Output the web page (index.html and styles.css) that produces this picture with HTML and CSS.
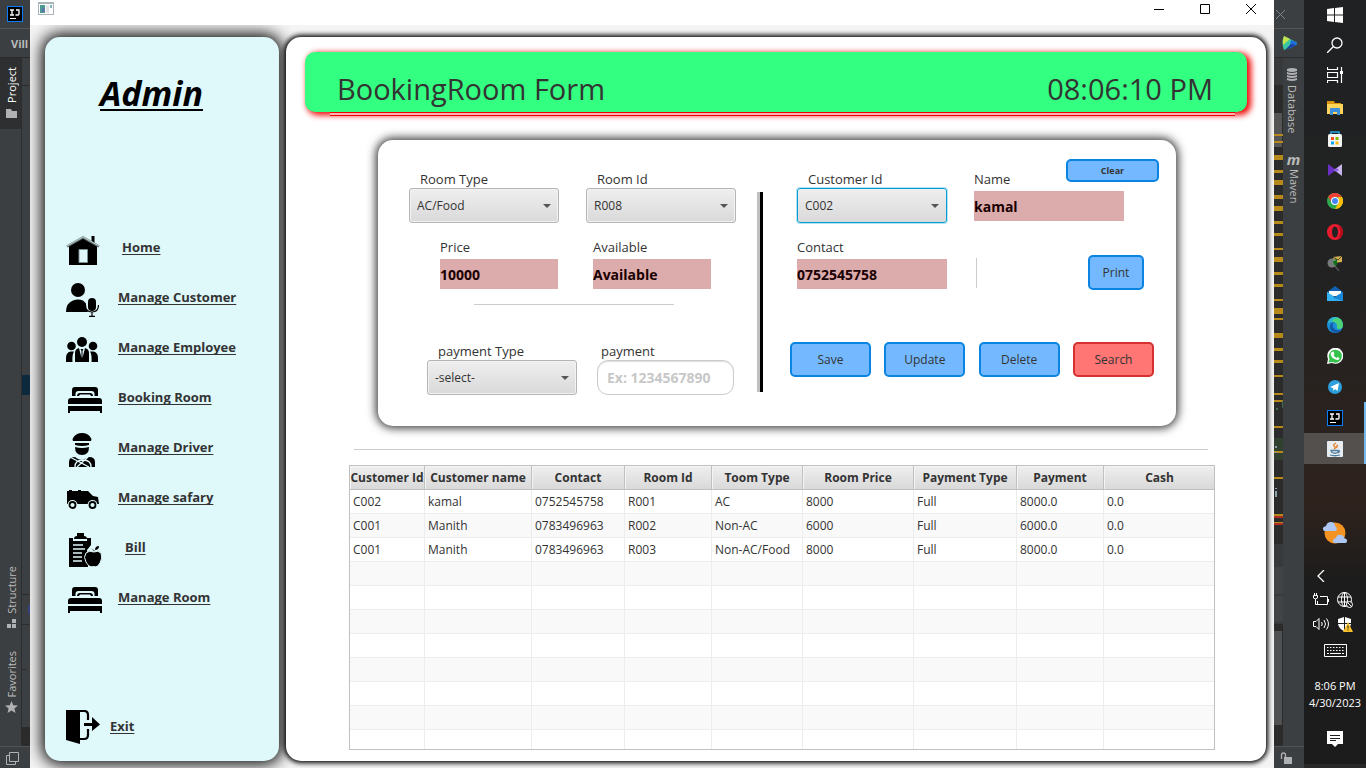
FILE: index.html
```
<!DOCTYPE html>
<html lang="en">
<head>
<meta charset="utf-8">
<title>BookingRoom Form</title>
<link rel="stylesheet" href="styles.css">
</head>
<body>
<svg class="sprite" aria-hidden="true">
  <symbol id="bed" viewBox="0 0 34 26">
    <path d="M4 9V3q0-3 3-3h20q3 0 3 3v6h-3.500V7q0-3-3-3h-13Q7.500 4 7.500 7v2z"/>
    <path d="M9 9q0-3 3-3h10q3 0 3 3h-2l-1-1.500h-10L11 9z"/>
    <path d="M3 11h28q3 0 3 3v3H0v-3q0-3 3-3zM0 19h34v7h-2v-2H2v2H0z"/>
  </symbol>
  <symbol id="ij" viewBox="0 0 16 16">
    <path fill="#087cfa" d="M0 0h16v16H0z"/><path d="M1 1h14v14H1z"/>
    <path d="M3 4h4M5 4v5M3 9h4M9 4h3v4q0 1-1 1H8.500" fill="none" stroke="#fff" stroke-width="1.300"/>
    <path d="M3 12h6v1H3z" fill="#fff"/>
  </symbol>
</svg>
<div class="desktop">
  <aside class="ide ide-left">
    <div class="ide-top"><svg width="16" height="16"><use href="#ij"/></svg></div>
    <div class="ide-path">Vill</div>
    <div class="ide-body">
      <div class="stripe">
        <div class="tool tool-active"><span>Project</span>
          <svg width="11" height="9"><path fill="#afb1b3" d="M0 0h5l1 2h5v7H0z"/></svg></div>
        <div class="tool tool-low"><span>Structure</span>
          <svg width="10" height="9"><path fill="#afb1b3" d="M5 0h4v4H5zM0 5h4v4H0zM5 5h4v4H5z"/></svg></div>
        <div class="tool tool-last"><span>Favorites</span>
          <svg width="13" height="12" viewBox="0 0 13 12"><path fill="#afb1b3" d="M6.500 0l1.800 4.200 4.700.3-3.600 2.900L10.500 12l-4-2.600-4 2.600 1.100-4.600L0 4.500l4.700-.3z"/></svg></div>
      </div>
      <svg class="tree" width="9" height="100%"><path fill="#2b2d2e" d="M0 0h1v700H0zM0 27h9v1H0zM0 536h9v1H0zM0 566h9v1H0zM0 611h5v1H0z"/><path fill="#0d293e" d="M1 317h8v20H1z"/><path fill="#35407c" d="M7 547h2v9H7z"/><path fill="#2b2b2b" d="M0 669h9v21H0z"/></svg>
    </div>
    <div class="ide-status"><svg width="13" height="13" fill="none" stroke="#afb1b3"><path d="M3.500.5h9v9h-9zM3.500 3.500h-3v9h9v-3"/></svg></div>
  </aside>

  <section class="window">
    <header class="titlebar">
      <svg class="app-icon" width="16" height="13"><path fill="#a9b5bb" d="M0 0h16v13H0z"/><path fill="#fff" d="M1 2h14v10H1z"/><path fill="#4d9a92" d="M2 3h5v8H2z"/><path fill="#5a79aa" d="M4 6h3v4H4z"/><path fill="#e2e5e6" d="M8 3h3v8H8z"/><path fill="#86b5bd" d="M12 3h2v3h-2z"/></svg>
      <button class="win-btn" aria-label="Minimize"><svg width="11" height="11" stroke="#000"><path d="M0 5.500h10"/></svg></button>
      <button class="win-btn" aria-label="Maximize"><svg width="11" height="11" stroke="#000" fill="none"><path d="M.5.5h9v9h-9z"/></svg></button>
      <button class="win-btn" aria-label="Close"><svg width="11" height="11" stroke="#000"><path d="M0 0l10 10M10 0L0 10"/></svg></button>
    </header>
    <div class="workspace">
      <nav class="sidebar">
        <h1 class="brand">Admin</h1>
        <ul class="menu">
          <li><svg class="icon" viewBox="0 0 34 30"><path d="M3 11L17 3l14 8v19H3z"/><path d="M25.500 1h3v8h-3z"/><path fill="none" stroke="#52605f" stroke-width="2.500" d="M1 11.500L17 2.500l16 9"/><path fill="none" stroke="#b4c7c8" stroke-width="1.300" d="M1 11L17 2l16 9"/><path fill="#dff8fa" stroke="#7e9091" d="M13 14.500h8.500v13H13z"/></svg><a class="step-1" href="#">Home</a></li>
          <li><svg class="icon" viewBox="0 0 34 34"><circle cx="12" cy="7" r="7"/><path d="M0 29q0-9 7-11.500 5-2 10 0l3 3v5l2 3.500z"/><rect x="22" y="15" width="8" height="13" rx="4"/><path fill="none" stroke="#000" stroke-width="1.200" d="M19.500 22q0 7 6.500 7t6.500-7M26 29v4M23 33.400h6"/></svg><a href="#">Manage Customer</a></li>
          <li><svg class="icon" viewBox="0 0 34 34"><circle cx="16" cy="9" r="5"/><circle cx="5.500" cy="13" r="4.300"/><circle cx="27" cy="13" r="4.300"/><path d="M0 29v-4q0-6 5-6.500h3q-2 3-1.500 10.500zM32 29v-4q0-6-5-6.500h-3q2 3 1.500 10.500zM9 29v-9q0-4 4-5l2.500 10v-7l-1-2h3l-1 2v7L19 15q4 1 4 5v9z"/></svg><a href="#">Manage Employee</a></li>
          <li><svg class="icon icon-bed" viewBox="0 0 34 26"><use href="#bed"/></svg><a href="#">Booking Room</a></li>
          <li><svg class="icon" viewBox="0 0 34 34"><path d="M7 8q-1-2 0-3 3-5 9-5t9 5q1 1 0 3zM9 10h14v2q-7 2-14 0zM9 14q7 2 14 0 0 8-7 8t-7-8zM3 34v-5q0-5 6-5 3 3 7 3l7-3q6 0 6 5v5z"/><path fill="none" stroke="#dff8fa" stroke-width="1.300" d="M4 24l19 10M9 34q0-7 8-7t8 7M11 34l11-10"/></svg><a href="#">Manage Driver</a></li>
          <li><svg class="icon" viewBox="0 0 34 34"><path d="M1 8h21l5 5 5 1 1 7H1zM3 7h3v1H3zM12 7h3v1h-3z"/><circle cx="6.500" cy="22" r="5" fill="#dff8fa"/><circle cx="26.500" cy="22" r="5" fill="#dff8fa"/><circle cx="6.500" cy="22" r="3" fill="none" stroke="#000" stroke-width="1.800"/><circle cx="26.500" cy="22" r="3" fill="none" stroke="#000" stroke-width="1.800"/></svg><a href="#">Manage safary</a></li>
          <li><svg class="icon icon-bed" viewBox="0 0 34 34"><path d="M1 5h4v3h14V5h4v7l-4 5 1 17H1zM6 6q0-3 3-3V0h7v3q3 0 3 3z"/><path fill="none" stroke="#dff8fa" stroke-width="1.500" d="M5 12h10M5 16h12M5 20h9M5 24h9M5 28h9"/><path stroke="#dff8fa" d="M26 19q4-2 7 1 2 5-1 10-3 5-6 3.500Q21 35 18 29q-3-5 0-9 3-3 8-1z"/><path d="M27 17q0-4 4-4 0 4-4 4zM23 15l3 3h1z"/></svg><a class="step-2" href="#">Bill</a></li>
          <li><svg class="icon icon-bed" viewBox="0 0 34 26"><use href="#bed"/></svg><a href="#">Manage Room</a></li>
        </ul>
        <div class="exit"><svg class="icon" viewBox="0 0 34 34"><path d="M0 0h14v34L0 30z"/><path fill="none" stroke="#000" stroke-width="2.200" d="M1 1h17q4 0 4 4v5M22 19v6q0 4-4 4h-4"/><path d="M18 13h8V7l8 7.500L26 21v-5h-8z"/></svg><a href="#">Exit</a></div>
      </nav>

      <main class="content">
        <div class="banner"><h2>BookingRoom Form</h2><time>08:06:10 PM</time></div>
        <div class="banner-rule"></div>

        <form class="card">
          <div class="half half-left">
            <div class="row row-wide">
              <div class="field"><label class="inset" for="roomType">Room Type</label><div class="combo"><select id="roomType"><option>AC/Food</option></select></div></div>
              <div class="field"><label class="inset" for="roomId">Room Id</label><div class="combo"><select id="roomId"><option>R008</option></select></div></div>
            </div>
            <div class="row row-mid">
              <div class="field narrow"><label for="price">Price</label><input class="value" id="price" value="10000" readonly></div>
              <div class="field narrow"><label for="avail">Available</label><input class="value" id="avail" value="Available" readonly></div>
            </div>
            <hr class="line">
            <div class="row row-pay">
              <div class="field"><label class="inset" for="payType">payment Type</label><div class="combo"><select id="payType"><option>-select-</option></select></div></div>
              <div class="field pay"><label for="pay">payment</label><input class="entry" id="pay" placeholder="Ex: 1234567890"></div>
            </div>
          </div>
          <div class="divider"></div>
          <div class="half half-right">
            <button type="button" class="btn btn-clear">Clear</button>
            <div class="row row-wide">
              <div class="field"><label class="inset" for="custId">Customer Id</label><div class="combo combo-focus"><select id="custId"><option>C002</option></select></div></div>
              <div class="field"><label for="name">Name</label><input class="value" id="name" value="kamal" readonly></div>
            </div>
            <div class="row row-contact">
              <div class="field"><label for="contact">Contact</label><input class="value" id="contact" value="0752545758" readonly></div>
              <div class="vline"></div>
              <button type="button" class="btn btn-print">Print</button>
            </div>
            <div class="actions">
              <button type="button" class="btn">Save</button>
              <button type="button" class="btn">Update</button>
              <button type="button" class="btn">Delete</button>
              <button type="button" class="btn btn-search">Search</button>
            </div>
          </div>
        </form>

        <hr class="table-rule">
        <div class="table-box">
          <table>
            <colgroup><col class="c75"><col class="c107"><col class="c93"><col class="c87"><col class="c91"><col class="c111"><col class="c103"><col class="c87"><col class="c111"></colgroup>
            <thead><tr><th>Customer Id</th><th>Customer name</th><th>Contact</th><th>Room Id</th><th>Toom Type</th><th>Room Price</th><th>Payment Type</th><th>Payment</th><th>Cash</th></tr></thead>
            <tbody>
              <tr><td>C002</td><td>kamal</td><td>0752545758</td><td>R001</td><td>AC</td><td>8000</td><td>Full</td><td>8000.0</td><td>0.0</td></tr>
              <tr><td>C001</td><td>Manith</td><td>0783496963</td><td>R002</td><td>Non-AC</td><td>6000</td><td>Full</td><td>6000.0</td><td>0.0</td></tr>
              <tr><td>C001</td><td>Manith</td><td>0783496963</td><td>R003</td><td>Non-AC/Food</td><td>8000</td><td>Full</td><td>8000.0</td><td>0.0</td></tr>
              <tr><td></td><td></td><td></td><td></td><td></td><td></td><td></td><td></td><td></td></tr>
              <tr><td></td><td></td><td></td><td></td><td></td><td></td><td></td><td></td><td></td></tr>
              <tr><td></td><td></td><td></td><td></td><td></td><td></td><td></td><td></td><td></td></tr>
              <tr><td></td><td></td><td></td><td></td><td></td><td></td><td></td><td></td><td></td></tr>
              <tr><td></td><td></td><td></td><td></td><td></td><td></td><td></td><td></td><td></td></tr>
              <tr><td></td><td></td><td></td><td></td><td></td><td></td><td></td><td></td><td></td></tr>
              <tr><td></td><td></td><td></td><td></td><td></td><td></td><td></td><td></td><td></td></tr>
              <tr><td></td><td></td><td></td><td></td><td></td><td></td><td></td><td></td><td></td></tr>
            </tbody>
          </table>
        </div>
      </main>
    </div>
  </section>

  <aside class="ide ide-right">
    <div class="ide-top"><svg width="11" height="11" stroke="#85888a"><path d="M1 1l9 9M10 1l-9 9"/></svg></div>
    <div class="ide-path"><svg width="15" height="15" viewBox="0 0 15 15"><path fill="#3bc6a0" d="M2 0q-3 7 0 14l12-5q2-2 0-3z"/><path fill="#c4e34c" d="M2 0q-2 4-1 9l7-6z"/><path fill="#1d6fd8" d="M9 4l5 2q2 1 0 3l-7 4z"/><path fill="#1a3fa8" d="M3 14l11-5-5-1z"/></svg></div>
    <div class="ide-body">
      <svg class="marks" width="9" height="100%"><path fill="#37393b" d="M0 0h9v27H0z"/><path fill="#555" d="M0 55h8v34H0z"/><path fill="#32402f" d="M0 380h9v22H0z"/>
        <path fill="#b58a1b" d="M0 76h9v2H0zM0 83h9v2H0zM0 97h9v5H0zM0 112h9v3H0zM0 122h9v5H0zM0 137h9v4H0zM0 148h9v5H0zM0 163h9v3H0zM0 175h9v3H0zM0 190h9v2H0zM0 199h9v5H0zM0 214h9v3H0zM0 226h9v3H0zM0 241h9v2H0zM0 250h9v6H0zM0 260h9v2H0zM0 275h9v5H0zM0 290h9v3H0zM0 302h9v3H0zM0 317h9v2H0zM0 335h9v2H0zM0 342h9v2H0zM0 368h9v2H0zM0 393h9v2H0zM0 419h9v2H0zM0 456h9v2H0zM0 464h9v1H0z"/>
        <path fill="#b02c25" d="M0 458h9v2H0zM0 465h9v2H0z"/><path fill="#8aa0aa" d="M1 388h2v2H1zM1 394h2v1H1zM1 430h2v1H1zM1 433h2v6H1z"/><path fill="#3e6b48" d="M8 343h1v7H8zM2 350h2v2H2z"/>
        <path fill="#37393b" d="M0 486h9v80H0z"/><path fill="#414345" d="M0 509h9v27H0zM0 538h9v26H0z"/><path fill="#505152" d="M0 573h8v94H0z"/></svg>
      <div class="stripe">
        <div class="tool"><svg width="12" height="13" viewBox="0 0 12 13" fill="#afb1b3"><path d="M1 1q5-2 10 0v2q-5 2-10 0zM1 4q5 2 10 0v2q-5 2-10 0zM1 7q5 2 10 0v2q-5 2-10 0zM1 10q5 2 10 0v2q-5 2-10 0z"/></svg><span>Database</span></div>
        <div class="tool tool-maven"><b>m</b><span>Maven</span></div>
      </div>
    </div>
    <div class="ide-status"><svg width="12" height="13"><path d="M1.500 7V3q0-2 2-2t2 2v2" fill="none" stroke="#afb1b3" stroke-width="1.300"/><path fill="#afb1b3" d="M4 5h8v7H4z"/></svg></div>
  </aside>

  <aside class="taskbar">
    <div class="tasks tasks-sys">
      <button aria-label="Start"><svg width="16" height="16" fill="#fff"><path d="M0 2l7-1v6.500H0zM8 1l8-1v7.500H8zM0 8.500h7V15l-7-1zM8 8.500h8V16l-8-1z"/></svg></button>
      <button aria-label="Search"><svg width="16" height="16" fill="none" stroke="#fff" stroke-width="1.300"><circle cx="10" cy="6" r="5"/><path d="M6.500 9.500L0 16"/></svg></button>
      <button aria-label="Task view"><svg width="16" height="16" fill="none" stroke="#fff" stroke-width="1.200"><path d="M.5 0v2.500h10V0M.5 16v-2.500h10V16M.5 5.500h10v5H.5zM14.500 0v16"/><path fill="#fff" stroke="none" d="M13 4h3v3h-3z"/></svg></button>
    </div>
    <div class="tasks">
      <button aria-label="Explorer"><svg width="16" height="16"><path fill="#d99710" d="M0 1h7l1 2h6v3H0z"/><path fill="#ffd45c" d="M0 4h16v10H0z"/><path fill="#3d8fd9" d="M3 15V9q0-1 1-1h8q1 0 1 1v6h-3v-3H6v3z"/></svg></button>
      <button aria-label="Store"><svg width="16" height="16"><path fill="none" stroke="#25a8e0" stroke-width="1.500" d="M4 4V1h8v3"/><rect y="3" x="1" width="14" height="13" rx="1.500" fill="#f4f4f4"/><path fill="#f25022" d="M4 6h3v3H4z"/><path fill="#7fba00" d="M8.500 6h3v3h-3z"/><path fill="#00a4ef" d="M4 10.500h3v3H4z"/><path fill="#ffb900" d="M8.500 10.500h3v3h-3z"/></svg></button>
      <button aria-label="Visual Studio"><svg width="16" height="16"><path fill="#6a2fc4" d="M1 2l8 6-8 6z"/><path fill="#c8b4ec" d="M15 2L7 8l8 6z"/><path fill="#8e5fe0" d="M9.500 6L7 8l2.500 2L12 8z"/></svg></button>
      <button aria-label="Chrome"><svg width="16" height="16"><circle cx="8" cy="8" r="8" fill="#2da94f"/><path fill="#ea4335" d="M1 4a8 8 0 0114 0H8L5 10z"/><path fill="#fbbc04" d="M15 4a8 8 0 01-7 12l4-7-1-5z"/><circle cx="8" cy="8" r="4" fill="#fff"/><circle cx="8" cy="8" r="3" fill="#4285f4"/></svg></button>
      <button aria-label="Opera"><svg width="16" height="16"><circle cx="8" cy="8" r="8" fill="#e81c2e"/><ellipse cx="8" cy="8" rx="3" ry="5.500" fill="#222"/><path d="M11 2q5 6 0 12 5-1 5-6t-5-6z" fill="#b70d1b"/></svg></button>
      <button aria-label="Mail search"><svg width="16" height="16"><path fill="#d3b355" d="M6 2l9-1v6l-8 1z"/><path fill="none" stroke="#54441a" d="M6 2l5 3 4-4"/><path fill="#10701c" d="M5 5l5-1v6l-4 1z"/><circle cx="5" cy="8" r="4.500" fill="#8d9191" opacity=".8"/><path fill="#10701c" d="M6 6h4v4H7z"/><path stroke="#555" stroke-width="1.500" d="M8 11l4 5"/></svg></button>
      <button aria-label="Mail"><svg width="16" height="16"><path fill="#1261b0" d="M0 6l8-6 8 6v3H0z"/><path fill="#fff" d="M2 5h12v5H2z"/><path fill="#35b2ef" d="M0 6l8 5 8-5v9H0z"/><path fill="#1a86d6" d="M16 15V6L6 12z"/></svg></button>
      <button aria-label="Edge"><svg width="16" height="16"><circle cx="8" cy="8" r="8" fill="#1b8fd8"/><path fill="#4cd27b" d="M8 0a8 8 0 018 8q0 4-4 4-3 0-2-3 0-3-3-4-4-1-6 1Q2 1 8 0z"/><path fill="#2bb5d8" d="M1 6Q3 0 8 0q2 0 3 1-6 0-6 4-2 0-4 1z"/><path fill="#145aa8" d="M3 12q-1-6 4-7-2 2-1 5 2 4 8 3-4 4-8 2-2-1-3-3z"/></svg></button>
      <button aria-label="WhatsApp"><svg width="16" height="16"><path fill="#fff" d="M0 16l1-5a8 8 0 114 4z"/><path fill="#35c24c" d="M1.500 14.500L2.500 11a6.500 6.500 0 113 3z"/><path fill="#fff" d="M5 4l1.500-.5L7.500 6l-1 1q1 2 3 3l1-1 2 1q0 2-2 2-6-1-7-6 0-1 1.500-2z"/></svg></button>
      <button aria-label="Telegram"><svg width="16" height="16"><circle cx="8" cy="8" r="7" fill="#2a9fdb"/><path fill="#fff" d="M3 8l9-4-1.500 8L8 10l-1.500 2-.5-3z"/></svg></button>
      <button class="running" aria-label="IntelliJ IDEA"><svg width="16" height="16"><use href="#ij"/></svg></button>
      <button class="running current" aria-label="Java"><svg width="16" height="16"><rect width="16" height="16" rx="1" fill="#e8edf1"/><path fill="none" stroke="#e8781c" stroke-width="1.300" d="M9 2q-4 2-1 4 1 1-1 2M11 4q-2 1-1 3"/><path fill="none" stroke="#4f7da0" stroke-width="1.300" d="M4 9.500h7v2q-3 1.500-6 0zM11 10q3-.5 0 2M3 14q5 1.500 10 0"/></svg></button>
    </div>
    <div class="tray">
      <svg width="26" height="24" viewBox="0 0 26 24"><circle cx="13" cy="12" r="10.500" fill="#f39422"/><path fill="#adc6f2" d="M2 10q-3-4 2-5 1-4 5-4 4 0 4 4 3 2 1 5zM12 22q-3-4 2-5 1-4 5-3 3 0 3 3 5 1 2 5z"/></svg>
      <svg class="chevron" width="8" height="12" fill="none" stroke="#fff" stroke-width="1.300"><path d="M7 0L1 6l6 6"/></svg>
      <div class="tray-grid">
        <svg width="16" height="16" viewBox="0 0 16 16" fill="none" stroke="#fff"><path d="M7 4.500h7.500v8H4.500V9M15.500 7v3M1.500 1v2M3.500 1v2M.5 3.500h4V6q-2 2-4 0zM2.500 7v5.500h3"/></svg>
        <svg width="16" height="16" viewBox="0 0 16 16" fill="none" stroke="#fff"><circle cx="7.500" cy="7.500" r="7"/><ellipse cx="7.500" cy="7.500" rx="3" ry="7"/><path d="M7.500 1v14M1 5h13M1 10h9"/><circle cx="12.500" cy="12.500" r="3" fill="#1c1c1c"/><path d="M10.500 10.500l4 4"/></svg>
        <svg width="16" height="16" viewBox="0 0 16 16" fill="none" stroke="#fff"><path d="M.5 5.500h2.500l3-3v11l-3-3H.5zM8.500 6q1.500 2 0 4M11 4q3 4 0 8M13.500 2.500q4 5.500 0 11"/></svg>
        <svg width="16" height="16" viewBox="0 0 16 16"><path fill="#fff" d="M1 3l6-2v6H1zM8 1l6 2v4H8zM1 8h6v7Q2 13 1 8zM8 8h6q-1 5-6 7z"/><path fill="#f8c12c" d="M11 6l5 10H6z"/><path stroke="#222" d="M11 9.500v3M11 13.500v1"/></svg>
      </div>
      <svg width="23" height="13" fill="none" stroke="#fff"><path d="M.5.500h22v12H.5z"/><path stroke-dasharray="1.500 1.500" d="M3 3.500h17M3 6.500h17"/><path d="M3 9.500h2M6 9.500h11M18 9.500h2"/></svg>
      <div class="clock"><span>8:06 PM</span><span>4/30/2023</span></div>
      <svg width="16" height="16"><path fill="#fff" d="M0 0h16v13h-5l-3 3-3-3H0z"/><path stroke="#1c1c1c" d="M3 4.500h10M3 7.500h10M3 9.500h6"/></svg>
    </div>
  </aside>
</div>
</body>
</html>
```
FILE: styles.css
```
* { box-sizing: border-box; }
body { margin: 0; font-family: "Open Sans", "Noto Sans", sans-serif; font-size: 12px; color: #333; background: #3c3f41; }
h1, h2, ul, hr { margin: 0; padding: 0; }
svg { display: block; flex: none; }
button { font-family: inherit; cursor: pointer; }
.sprite { position: absolute; width: 0; height: 0; }
.desktop { display: grid; grid-template-columns: 30px minmax(0, 1fr) 30px 62px; min-height: 100vh; }

.ide { display: flex; flex-direction: column; background: #3c3f41; color: #bbb; overflow: hidden; }
.ide-top { display: flex; align-items: center; height: 29px; padding-left: 7px; border-bottom: 1px solid #555; }
.ide-path { display: flex; align-items: center; height: 29px; padding-left: 11px; font-size: 11px; font-weight: bold; border-bottom: 1px solid #2b2b2b; }
.ide-body { display: flex; flex: 1; min-height: 0; }
.ide-status { height: 22px; padding: 5px 0 0 6px; border-top: 1px solid #505254; }
.ide-right .ide-top { padding-left: 1px; }
.ide-right .ide-path { padding-left: 8px; }
.stripe { display: flex; flex-direction: column; width: 21px; }
.ide-left .stripe { padding-bottom: 33px; }
.tool { display: flex; flex-direction: column; align-items: center; gap: 6px; padding-left: 2px; }
.tool span { writing-mode: vertical-rl; font-size: 11px; line-height: 16px; }
.ide-left .tool span { transform: rotate(180deg); }
.tool-active { height: 71px; padding-top: 9px; background: #2d2f30; color: #fff; }
.tool-low { margin-top: auto; }
.tool-last { gap: 3px; margin-top: 23px; }
.ide-right .tool { gap: 4px; padding: 10px 3px 0 0; }
.ide-right .tool-maven { padding: 18px 0 0; gap: 2px; }
.tool b { font-size: 15px; font-style: italic; line-height: 16px; }
.marks { background: #2b2b2b; }

.window { display: flex; flex-direction: column; background: #f4f4f4; }
.titlebar { display: flex; height: 25px; padding-left: 8px; background: #fff; }
.app-icon { margin: 2px auto 0 0; }
.win-btn { display: flex; align-items: center; justify-content: center; width: 46px; height: 19px; padding: 0; border: 0; background: none; }
.workspace { display: flex; flex: 1; gap: 7px; padding: 12px 8px 7px 15px; overflow: hidden; }

.sidebar { display: flex; flex-direction: column; width: 234px; padding: 34px 21px 17px; border-radius: 15px; background: #dff8fa; box-shadow: 0 0 16px 3px #000; }
.brand { padding-right: 21px; text-align: center; font-size: 34px; line-height: 44px; font-style: italic; color: #000; text-decoration: underline; text-decoration-thickness: 2px; text-underline-offset: 3px; text-decoration-skip-ink: none; }
.menu { display: flex; flex-direction: column; margin-top: 109px; list-style: none; }
.menu li { display: flex; align-items: center; gap: 18px; height: 50px; }
.icon { width: 34px; height: 34px; margin-top: 2px; }
.icon-bed { position: relative; left: 2px; }
.menu a, .exit a { font-size: 13px; line-height: 18px; font-weight: bold; color: #333; text-underline-offset: 2px; text-decoration-skip-ink: none; }
.menu a { margin-bottom: 4px; }
.step-1 { padding-left: 4px; }
.step-2 { padding-left: 7px; }
.exit { display: flex; align-items: center; gap: 10px; margin-top: auto; }

.content { flex: 1; min-width: 0; padding: 15px 19px 11px; border-radius: 15px; background: #fff; box-shadow: 0 0 5px 2px #000; }
.banner { display: flex; justify-content: space-between; align-items: flex-end; height: 60px; padding: 0 34px 3px 32px; border-radius: 10px; background: #33ff80; box-shadow: 3px 2px 6px 1px #f00000; }
.banner h2, .banner time { font-size: 29px; line-height: 40px; font-weight: normal; }
.banner-rule { position: relative; height: 4px; margin: 0 12px 0 25px; border: solid #e00; border-width: 1px 0; background: #ffb3b3; }

.card { display: flex; margin: 24px 71px 0 73px; min-height: 286px; border-radius: 15px; background: #fff; box-shadow: 0 0 10px 2px #000c; }
.half { display: flex; flex-direction: column; padding-top: 30px; }
.half-left { width: 379px; }
.half-right { position: relative; flex: 1; }
.divider { width: 6px; height: 200px; margin-top: 52px; border-left: 3px solid #c0c0c0; background: #000; }
.row { display: flex; }
.row-wide { gap: 27px; padding-left: 31px; margin-bottom: 15px; }
.half-right .row-wide, .row-contact { padding-left: 34px; }
.row-mid { gap: 35px; padding-left: 62px; }
.row-pay { gap: 20px; padding-left: 49px; margin-top: 37px; }
.field { display: flex; flex-direction: column; width: 150px; }
.narrow { width: 118px; }
.pay { width: 137px; }
.field label { font-size: 13px; line-height: 18px; }
.field .inset { padding-left: 11px; }
.pay label { padding-left: 4px; }
.combo { position: relative; height: 35px; }
.combo::after { content: ""; position: absolute; right: 8px; top: 16px; border: solid transparent; border-width: 4px 4px 0; border-top-color: #555; pointer-events: none; }
.combo select { width: 100%; height: 35px; padding: 0 7px; appearance: none; border: 1px solid #b5b5b5; border-radius: 3px; background: linear-gradient(#efefef, #d9d9d9); font: inherit; color: #333; box-shadow: inset 0 0 0 1px #f2f2f2; }
.combo-focus select { border-color: #039ed3; box-shadow: 0 0 0 1px #b3e2f2; }
.value { width: 100%; height: 30px; margin-top: 3px; padding: 0; border: 0; background: #dcabab; font: bold 14px "Open Sans", sans-serif; color: #1a0000; }
.entry { width: 100%; height: 35px; padding: 0 9px; border: 1px solid #ccc; border-radius: 11px; background: #fff; font: bold 14px "Open Sans", sans-serif; box-shadow: inset 0 1px 1px #ddd; }
.entry::placeholder { color: #c8c8c8; }
.line { width: 200px; height: 1px; margin: 15px 0 0 96px; border: 0; background: #ccc; }
.vline { width: 1px; height: 30px; margin: 20px 111px 0 29px; background: #ccc; }
.btn { width: 81px; height: 35px; padding: 0; border: 2px solid #0984e3; border-radius: 5px; background: #74b9ff; font-size: 12px; color: #333; }
.btn-clear { position: absolute; top: 19px; right: 17px; width: 93px; height: 23px; font-size: 9px; font-weight: bold; }
.btn-print { width: 56px; margin-top: 17px; }
.actions { display: flex; gap: 13px; margin: 52px 22px 0 27px; justify-content: space-between; }
.btn-search { border-color: #d63031; background: #ff7675; }

.table-rule { height: 1px; margin: 23px 39px 15px 49px; border: 0; background: #ccc; }
.table-box { height: 285px; margin: 0 32px 0 44px; overflow: hidden; border: 1px solid #c0c0c0; }
table { width: 100%; table-layout: fixed; border-collapse: separate; border-spacing: 0; }
.c75 { width: 75px; } .c87 { width: 87px; } .c91 { width: 91px; } .c93 { width: 93px; }
.c103 { width: 103px; } .c107 { width: 107px; } .c111 { width: 111px; }
th, td { height: 24px; padding: 0 3px; line-height: 20px; white-space: nowrap; text-align: left; border-right: 1px solid #ededed; border-bottom: 1px solid #ededed; }
th { padding: 0; font-size: 12px; text-align: center; border-color: #c0c0c0; background: linear-gradient(#efefef, #d9d9d9); box-shadow: inset 1px 1px 0 #f4f4f4; }
th:last-child, td:last-child { border-right: 0; }
tbody tr:nth-child(even) { background: #f9f9f9; }

.taskbar { display: flex; flex-direction: column; background: linear-gradient(#1f2122, #222 35%, #2e221d 66%, #1c1c1c 76%); color: #fff; border-bottom: 4px solid #292929; }
.tasks { display: flex; flex-direction: column; }
.tasks button { display: flex; align-items: center; justify-content: center; height: 31px; padding: 0; border: 0; background: none; }
.tasks-sys { padding-bottom: 2px; }
.tasks-sys button { height: 30px; }
.tasks .running { border-right: 2px solid #76b9ed; padding-left: 2px; }
.tasks .current { background-color: #54504e; }
.tray { display: flex; flex: 1; flex-direction: column; align-items: center; padding: 57px 0 17px; }
.chevron { margin: 25px 28px 10px 0; }
.tray-grid { display: grid; grid-template-columns: 16px 16px; gap: 8px; margin: 0 4px 12px 0; }
.clock { display: flex; flex-direction: column; align-items: center; margin: auto 0; font-size: 11px; line-height: 17px; }
```
